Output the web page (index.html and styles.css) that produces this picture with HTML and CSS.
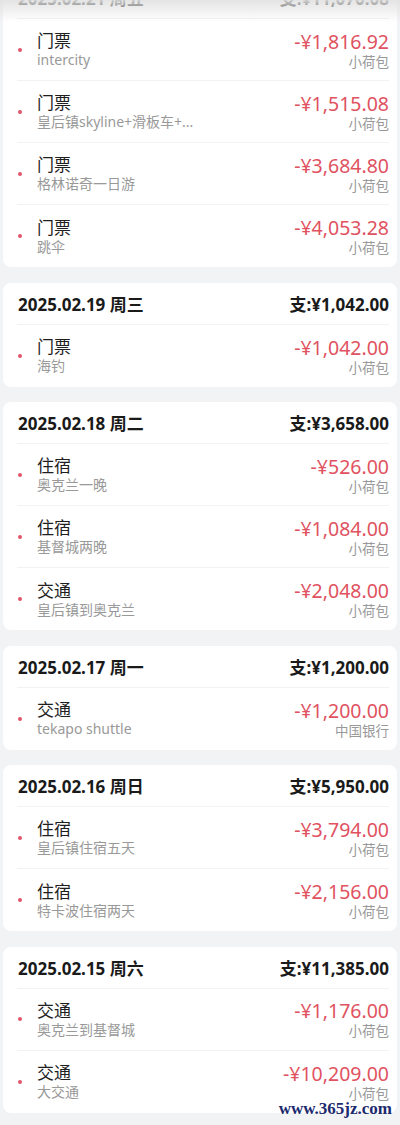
FILE: index.html
```html
<!DOCTYPE html>
<html lang="zh-CN">

<head>
  <meta charset="UTF-8">
  <meta name="viewport" content="width=device-width, initial-scale=1.0">
  <title>账单明细</title>
  <link rel="stylesheet" href="styles.css">
</head>

<body>
  <div class="top-fade"></div>

  <div class="list">
    <!-- 2.21 -->
    <div class="day-card first">
      <div class="day-head">
        <span class="day-date">2025.02.21 周五</span>
        <span class="day-total">支:¥11,070.08</span>
      </div>
      <div class="bill">
        <span class="dot"></span>
        <div class="bill-info">
          <div class="bill-type">门票</div>
          <div class="bill-note">intercity</div>
        </div>
        <div class="bill-right">
          <div class="bill-amount">-¥1,816.92</div>
          <div class="bill-account">小荷包</div>
        </div>
      </div>
      <div class="bill">
        <span class="dot"></span>
        <div class="bill-info">
          <div class="bill-type">门票</div>
          <div class="bill-note">皇后镇skyline+滑板车+...</div>
        </div>
        <div class="bill-right">
          <div class="bill-amount">-¥1,515.08</div>
          <div class="bill-account">小荷包</div>
        </div>
      </div>
      <div class="bill">
        <span class="dot"></span>
        <div class="bill-info">
          <div class="bill-type">门票</div>
          <div class="bill-note">格林诺奇一日游</div>
        </div>
        <div class="bill-right">
          <div class="bill-amount">-¥3,684.80</div>
          <div class="bill-account">小荷包</div>
        </div>
      </div>
      <div class="bill">
        <span class="dot"></span>
        <div class="bill-info">
          <div class="bill-type">门票</div>
          <div class="bill-note">跳伞</div>
        </div>
        <div class="bill-right">
          <div class="bill-amount">-¥4,053.28</div>
          <div class="bill-account">小荷包</div>
        </div>
      </div>
    </div>

    <!-- 2.19 -->
    <div class="day-card">
      <div class="day-head">
        <span class="day-date">2025.02.19 周三</span>
        <span class="day-total">支:¥1,042.00</span>
      </div>
      <div class="bill">
        <span class="dot"></span>
        <div class="bill-info">
          <div class="bill-type">门票</div>
          <div class="bill-note">海钓</div>
        </div>
        <div class="bill-right">
          <div class="bill-amount">-¥1,042.00</div>
          <div class="bill-account">小荷包</div>
        </div>
      </div>
    </div>

    <!-- 2.18 -->
    <div class="day-card">
      <div class="day-head">
        <span class="day-date">2025.02.18 周二</span>
        <span class="day-total">支:¥3,658.00</span>
      </div>
      <div class="bill">
        <span class="dot"></span>
        <div class="bill-info">
          <div class="bill-type">住宿</div>
          <div class="bill-note">奥克兰一晚</div>
        </div>
        <div class="bill-right">
          <div class="bill-amount">-¥526.00</div>
          <div class="bill-account">小荷包</div>
        </div>
      </div>
      <div class="bill">
        <span class="dot"></span>
        <div class="bill-info">
          <div class="bill-type">住宿</div>
          <div class="bill-note">基督城两晚</div>
        </div>
        <div class="bill-right">
          <div class="bill-amount">-¥1,084.00</div>
          <div class="bill-account">小荷包</div>
        </div>
      </div>
      <div class="bill">
        <span class="dot"></span>
        <div class="bill-info">
          <div class="bill-type">交通</div>
          <div class="bill-note">皇后镇到奥克兰</div>
        </div>
        <div class="bill-right">
          <div class="bill-amount">-¥2,048.00</div>
          <div class="bill-account">小荷包</div>
        </div>
      </div>
    </div>

    <!-- 2.17 -->
    <div class="day-card">
      <div class="day-head">
        <span class="day-date">2025.02.17 周一</span>
        <span class="day-total">支:¥1,200.00</span>
      </div>
      <div class="bill">
        <span class="dot"></span>
        <div class="bill-info">
          <div class="bill-type">交通</div>
          <div class="bill-note">tekapo shuttle</div>
        </div>
        <div class="bill-right">
          <div class="bill-amount">-¥1,200.00</div>
          <div class="bill-account">中国银行</div>
        </div>
      </div>
    </div>

    <!-- 2.16 -->
    <div class="day-card">
      <div class="day-head">
        <span class="day-date">2025.02.16 周日</span>
        <span class="day-total">支:¥5,950.00</span>
      </div>
      <div class="bill">
        <span class="dot"></span>
        <div class="bill-info">
          <div class="bill-type">住宿</div>
          <div class="bill-note">皇后镇住宿五天</div>
        </div>
        <div class="bill-right">
          <div class="bill-amount">-¥3,794.00</div>
          <div class="bill-account">小荷包</div>
        </div>
      </div>
      <div class="bill">
        <span class="dot"></span>
        <div class="bill-info">
          <div class="bill-type">住宿</div>
          <div class="bill-note">特卡波住宿两天</div>
        </div>
        <div class="bill-right">
          <div class="bill-amount">-¥2,156.00</div>
          <div class="bill-account">小荷包</div>
        </div>
      </div>
    </div>

    <!-- 2.15 -->
    <div class="day-card">
      <div class="day-head">
        <span class="day-date">2025.02.15 周六</span>
        <span class="day-total">支:¥11,385.00</span>
      </div>
      <div class="bill">
        <span class="dot"></span>
        <div class="bill-info">
          <div class="bill-type">交通</div>
          <div class="bill-note">奥克兰到基督城</div>
        </div>
        <div class="bill-right">
          <div class="bill-amount">-¥1,176.00</div>
          <div class="bill-account">小荷包</div>
        </div>
      </div>
      <div class="bill">
        <span class="dot"></span>
        <div class="bill-info">
          <div class="bill-type">交通</div>
          <div class="bill-note">大交通</div>
        </div>
        <div class="bill-right">
          <div class="bill-amount">-¥10,209.00</div>
          <div class="bill-account">小荷包</div>
        </div>
      </div>
    </div>
  </div>

  <div class="watermark">www.365jz.com</div>
</body>

</html>
```

FILE: styles.css
```css
body {
  font-family: "Noto Sans", "Noto Sans CJK SC", sans-serif;
  background-color: #f2f3f5;
  margin: 0;
  padding: 0;
  height: 1125px;
  overflow: hidden;
  position: relative;
}

.top-fade {
  position: absolute;
  left: 0;
  top: 0;
  width: 100%;
  height: 22px;
  background: linear-gradient(to bottom, rgba(225, 225, 225, 0.9), rgba(240, 240, 240, 0));
  z-index: 2;
}

.list {
  display: flex;
  flex-direction: column;
  gap: 15.5px;
  padding: 0 3px;
}

.day-card {
  background: #fff;
  border-radius: 8px;
  padding: 0 8px 0 14px;
}

.day-card.first {
  margin-top: -23px;
}

.day-head {
  display: flex;
  justify-content: space-between;
  align-items: center;
  height: 42px;
  border-bottom: 1px solid #f2f2f2;
  box-sizing: border-box;
  font-weight: bold;
  font-size: 17px;
  color: #1a1a1a;
}

.day-date {
  padding-left: 1px;
}

.bill {
  display: flex;
  align-items: center;
  height: 62px;
  border-bottom: 1px solid #f2f2f2;
  box-sizing: border-box;
}

.bill:last-child {
  border-bottom: none;
}

.dot {
  width: 4px;
  height: 4px;
  border-radius: 50%;
  background-color: #e0566a;
  margin: 0 15px 0 1px;
  flex-shrink: 0;
}

.bill-info {
  flex: 1;
  min-width: 0;
}

.bill-type {
  font-size: 17px;
  color: #1f1f1f;
  line-height: 21px;
}

.bill-note {
  font-size: 14px;
  color: #999;
  line-height: 18px;
  white-space: nowrap;
}

.bill-right {
  text-align: right;
}

.bill-amount {
  font-size: 19.5px;
  color: #e0525f;
  line-height: 24px;
}

.bill-account {
  font-size: 13.5px;
  color: #999;
  line-height: 16px;
}

.watermark {
  position: absolute;
  right: 8px;
  top: 1099px;
  font-family: "Liberation Serif", "DejaVu Serif", serif;
  font-weight: bold;
  font-size: 17px;
  color: #1c2a6e;
  z-index: 3;
}
```
